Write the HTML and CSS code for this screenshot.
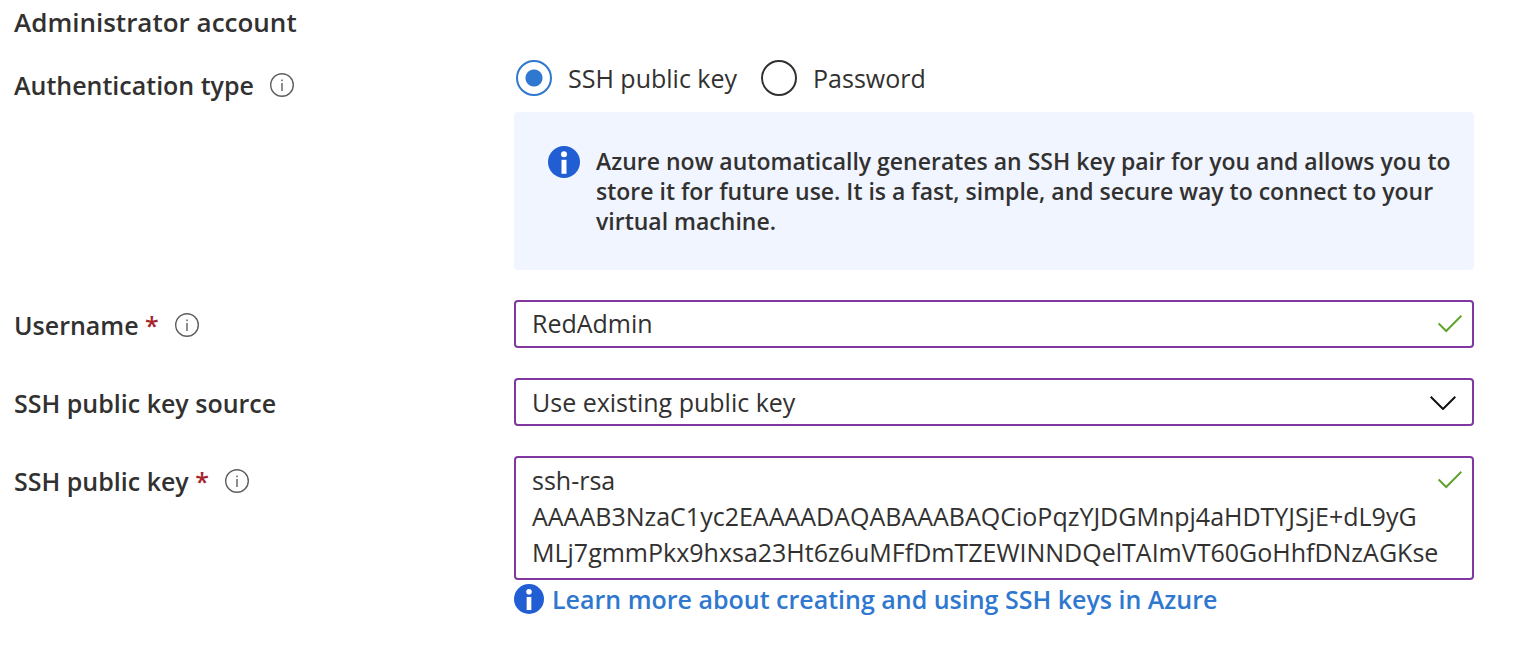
FILE: index.html
```html
<!DOCTYPE html>
<html lang="en">
<head>
<meta charset="utf-8">
<title>Administrator account</title>
<link rel="stylesheet" href="styles.css">
</head>
<body>
<svg class="sprite" aria-hidden="true">
  <symbol id="info-outline" viewBox="0 0 24 24">
    <circle cx="12" cy="12" r="11.3" fill="none" stroke="currentColor" stroke-width="1.4"/>
    <path d="M12 10v8M12 6.4v1.8" fill="none" stroke="currentColor" stroke-width="1.4"/>
  </symbol>
  <symbol id="info-solid" viewBox="0 0 32 32">
    <circle cx="16" cy="16" r="16" fill="#215dd3"/>
    <circle cx="16" cy="8.3" r="3" fill="#fff"/>
    <rect x="13.5" y="13.8" width="5" height="14" fill="#fff"/>
  </symbol>
  <symbol id="tick" viewBox="0 0 24 18">
    <path d="M0.6 8.4 8.2 16 23.4 0.8" fill="none" stroke="currentColor" stroke-width="2"/>
  </symbol>
</svg>
<form class="form">
  <h2 class="title">Administrator account</h2>

  <div class="row row-auth">
    <div class="name"><span id="auth-label">Authentication type</span>
      <button type="button" class="hint" aria-label="About authentication type"><svg><use href="#info-outline"/></svg></button></div>
    <div class="field">
      <div class="radios" role="radiogroup" aria-labelledby="auth-label">
        <label class="choice"><input type="radio" name="auth" checked>SSH public key</label>
        <label class="choice"><input type="radio" name="auth">Password</label>
      </div>
      <div class="notice">
        <svg class="notice-icon" aria-hidden="true"><use href="#info-solid"/></svg>
        <p>Azure now automatically generates an SSH key pair for you and allows you to store it for future use. It is a fast, simple, and secure way to connect to your virtual machine.</p>
      </div>
    </div>
  </div>

  <div class="row">
    <div class="name"><label for="username">Username <span class="required">*</span></label>
      <button type="button" class="hint" aria-label="About username"><svg><use href="#info-outline"/></svg></button></div>
    <div class="field">
      <input class="control" id="username" type="text" value="RedAdmin">
      <svg class="tick" aria-hidden="true"><use href="#tick"/></svg>
    </div>
  </div>

  <div class="row">
    <div class="name"><label for="source">SSH public key source</label></div>
    <div class="field">
      <select class="control" id="source"><option>Use existing public key</option></select>
      <svg class="chevron" viewBox="0 0 26 14" aria-hidden="true"><path d="M0.7 0.7 13 13 25.3 0.7" fill="none" stroke="#111" stroke-width="2"/></svg>
    </div>
  </div>

  <div class="row">
    <div class="name"><label for="key">SSH public key <span class="required">*</span></label>
      <button type="button" class="hint" aria-label="About SSH public key"><svg><use href="#info-outline"/></svg></button></div>
    <div class="field">
      <textarea class="control key" id="key" rows="3" spellcheck="false">ssh-rsa
AAAAB3NzaC1yc2EAAAADAQABAAABAQCioPqzYJDGMnpj4aHDTYJSjE+dL9yG
MLj7gmmPkx9hxsa23Ht6z6uMFfDmTZEWINNDQelTAImVT60GoHhfDNzAGKse</textarea>
      <svg class="tick" aria-hidden="true"><use href="#tick"/></svg>
      <div class="learn">
        <svg class="learn-icon" aria-hidden="true"><use href="#info-solid"/></svg>
        <a href="#">Learn more about creating and using SSH keys in Azure</a>
      </div>
    </div>
  </div>
</form>
</body>
</html>
```
FILE: styles.css
```css
* { box-sizing: border-box; }

body {
  margin: 0;
  background: #fff;
  color: #323130;
  font: 400 25px/36px "Open Sans", "Noto Sans", sans-serif;
}

.sprite { position: absolute; width: 0; height: 0; }

.form {
  display: flex;
  flex-direction: column;
  gap: 30px;
  padding: 4px 46px 46px 14px;
}

.title {
  margin: 0 0 -10px;
  font-size: 26px;
  line-height: 36px;
  font-weight: 600;
}

.row {
  display: grid;
  grid-template-columns: 500px minmax(0, 1fr);
  align-items: start;
}

.name {
  display: flex;
  align-items: center;
  gap: 16px;
  padding-top: 7px;
  font-weight: 600;
}

.required { color: #a4262c; }

.hint {
  width: 24px;
  height: 24px;
  padding: 0;
  border: 0;
  background: none;
  color: #605e5c;
}

.hint svg { display: block; width: 24px; height: 24px; }

.field { position: relative; }

.radios {
  display: flex;
  gap: 24px;
  padding-left: 2px;
  margin-bottom: 16px;
}

.choice {
  display: flex;
  align-items: center;
  gap: 16px;
}

.choice input {
  appearance: none;
  width: 36px;
  height: 36px;
  margin: 0;
  border: 2px solid #323130;
  border-radius: 50%;
}

.choice input:checked {
  border-color: #2f78d0;
  background: radial-gradient(circle, #2f78d0 8px, transparent 9px);
}

.notice {
  display: flex;
  gap: 16px;
  padding: 34px 16px 34px 34px;
  border-radius: 4px;
  background: #f0f5ff;
  font-size: 23px;
  line-height: 30px;
  font-weight: 600;
}

.notice p { margin: 0; }

.notice-icon { flex: none; width: 32px; height: 32px; }

.control {
  appearance: none;
  display: block;
  width: 100%;
  height: 48px;
  margin: 0;
  padding: 0 16px;
  border: 2px solid #8037a0;
  border-radius: 4px;
  background: #fff;
  color: inherit;
  font: inherit;
  outline: 0;
}

input.control { padding-bottom: 3px; }

.key {
  height: auto;
  padding: 4px 16px 8px;
  overflow: hidden;
  resize: none;
  white-space: pre;
}

.tick {
  position: absolute;
  top: 15px;
  right: 12px;
  width: 24px;
  height: 18px;
  color: #5fa32b;
}

.chevron {
  position: absolute;
  top: 18px;
  right: 18px;
  width: 26px;
  height: 14px;
  pointer-events: none;
}

.learn {
  display: flex;
  align-items: center;
  gap: 8px;
  padding-top: 1px;
  font-weight: 600;
}

.learn-icon { flex: none; width: 30px; height: 30px; }

.learn a { color: #2f78d0; text-decoration: none; }
```
